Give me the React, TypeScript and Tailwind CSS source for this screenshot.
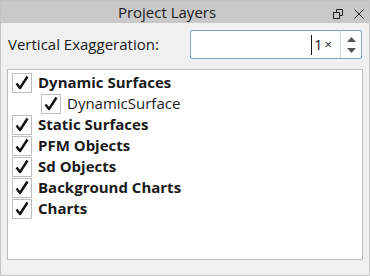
import React from 'react';

const layers = [
  { name: 'Dynamic Surfaces', bold: true, indent: false },
  { name: 'DynamicSurface', bold: false, indent: true },
  { name: 'Static Surfaces', bold: true, indent: false },
  { name: 'PFM Objects', bold: true, indent: false },
  { name: 'Sd Objects', bold: true, indent: false },
  { name: 'Background Charts', bold: true, indent: false },
  { name: 'Charts', bold: true, indent: false },
];

const CheckBox = () => (
  <div className="w-[20px] h-[20px] border border-[#bdbdbd] bg-white flex items-center justify-center shrink-0">
    <svg width="16" height="16" viewBox="0 0 16 16">
      <path d="M2.5 8.5 L6 13 L13.5 1.5" fill="none" stroke="#111" strokeWidth="2.4" strokeLinejoin="round" />
    </svg>
  </div>
);

const App = () => {
  return (
    <div
      className="w-[370px] h-[276px] border border-[#c4c4c4] bg-[#f0f0f0] flex flex-col text-[#1a1a1a]"
      style={{ fontFamily: '"Open Sans", "Noto Sans", sans-serif' }}
    >
      <div className="h-[22px] bg-[#c9c9c9] flex items-center shrink-0">
        <div className="flex-1 text-center text-[15px] leading-none pt-[1px]">Project Layers</div>
        <div className="w-[36px] flex items-center gap-[11px] pt-[3px]">
          <svg width="10" height="10" viewBox="0 0 10 10">
            <rect x="0.5" y="3.5" width="6" height="6" fill="none" stroke="#222" />
            <path d="M3.5 3.5 V0.5 H9.5 V6.5 H6.5" fill="none" stroke="#222" />
          </svg>
          <svg width="10" height="10" viewBox="0 0 10 10">
            <path d="M0.5 0.5 L9.5 9.5 M9.5 0.5 L0.5 9.5" stroke="#222" strokeWidth="1" />
          </svg>
        </div>
      </div>

      <div className="flex items-center mt-[7px] px-[7px]">
        <span className="text-[15px]">Vertical Exaggeration:</span>
        <div className="ml-auto w-[172px] h-[29px] border border-[#7fa3c0] rounded-[2px] bg-white flex">
          <div className="flex-1 flex items-center justify-end pr-[8px]">
            <span className="w-[1px] h-[20px] bg-[#111] mr-[2px]" />
            <span className="text-[15px]">1</span>
            <span className="text-[13px] ml-[2px]">×</span>
          </div>
          <div className="w-[21px] border-l border-[#c9d6e0] flex flex-col items-center justify-center gap-[6px]">
            <svg width="9" height="5" viewBox="0 0 9 5">
              <path d="M0 5 L4.5 0 L9 5 Z" fill="#555" />
            </svg>
            <svg width="9" height="5" viewBox="0 0 9 5">
              <path d="M0 0 L4.5 5 L9 0 Z" fill="#555" />
            </svg>
          </div>
        </div>
      </div>

      <div className="mt-[10px] mx-[6px] h-[191px] border border-[#bcbcbc] bg-white pt-[2px] pl-[4px]">
        {layers.map((l) => (
          <div key={l.name} className={`h-[21px] flex items-center ${l.indent ? 'pl-[29px]' : ''}`}>
            <CheckBox />
            <span className={`ml-[6px] text-[15px] ${l.bold ? 'font-bold' : ''}`}>{l.name}</span>
          </div>
        ))}
      </div>
    </div>
  );
};

export default App;
